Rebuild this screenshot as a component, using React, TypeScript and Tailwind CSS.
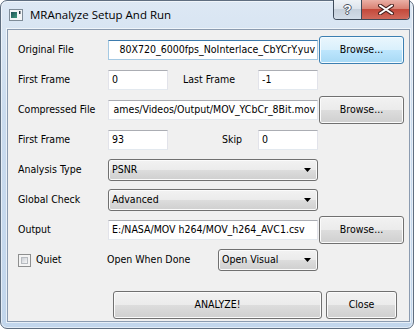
import type { ReactNode } from 'react';

const btnNormal =
  'rounded-[3px] border border-[#707070] bg-[linear-gradient(#f2f2f2_0%,#ebebeb_50%,#dddddd_50%,#cfcfcf_100%)] shadow-[inset_0_0_0_1px_#fbfbfb]';
const btnHot =
  'rounded-[3px] border border-[#3c7fb1] bg-[linear-gradient(#eaf6fd_0%,#d9f0fc_50%,#bee6fd_50%,#a7d9f5_100%)] shadow-[inset_0_0_0_1px_#f4fbff]';

function Button({ children, hot, className }: { children: ReactNode; hot?: boolean; className: string }) {
  return (
    <div className={`${hot ? btnHot : btnNormal} ${className} flex items-center justify-center shrink-0`}>
      {children}
    </div>
  );
}

function TextBox({
  text,
  className,
  end,
  focus,
}: {
  text: string;
  className: string;
  end?: boolean;
  focus?: boolean;
}) {
  const border = focus
    ? 'border border-[#a4c9e3] border-t-[#3d7bad]'
    : 'border border-[#e2e3ea] border-t-[#abadb3] border-b-[#e3e9ef]';
  return (
    <div
      className={`${className} ${border} h-[20px] bg-white flex items-center overflow-hidden whitespace-nowrap shrink-0 ${
        end ? 'justify-end pr-[2px]' : 'pl-[3px]'
      }`}
    >
      {text}
    </div>
  );
}

function Combo({ text, className }: { text: string; className: string }) {
  return (
    <div className={`${btnNormal} ${className} flex items-center justify-between pl-[3px] pr-[6px] shrink-0`}>
      <span>{text}</span>
      <svg width="7" height="4" viewBox="0 0 7 4">
        <polygon points="0,0 7,0 3.5,4" fill="#000" />
      </svg>
    </div>
  );
}

function Row({ label, children }: { label: ReactNode; children: ReactNode }) {
  return (
    <div className="flex items-center h-[30px] pl-[10px]">
      <div className="w-[90px] shrink-0">{label}</div>
      {children}
    </div>
  );
}

function TitleBar() {
  return (
    <div className="flex items-start h-[28px] shrink-0">
      <div className="flex items-center h-[28px] pl-[2px] gap-[7px]">
        <svg width="14" height="12" viewBox="0 0 14 12">
          <defs>
            <linearGradient id="ico" x1="0" y1="0" x2="1" y2="1">
              <stop offset="0" stopColor="#1d4f56" />
              <stop offset="1" stopColor="#3f9a7e" />
            </linearGradient>
          </defs>
          <rect x="0.5" y="0.5" width="13" height="11" fill="#f3f5f7" stroke="#7f8c98" />
          <rect x="2" y="3" width="6" height="6" fill="url(#ico)" />
          <rect x="10" y="2" width="1.5" height="3" fill="#2d3a46" />
        </svg>
        <span className="font-['Open_Sans',sans-serif] text-[11.5px] text-black">MRAnalyze Setup And Run</span>
      </div>
      <div className="ml-auto -mt-[1px] flex h-[20px] border border-t-0 border-[#3e4a59] rounded-b-[4px] overflow-hidden">
        <div className="w-[28px] border-r border-[#3e4a59] bg-[linear-gradient(#eef2f6_0%,#dde4ec_45%,#c6d0db_50%,#d3dde8_100%)] flex items-center justify-center">
          <span className="font-['Liberation_Sans',sans-serif] font-bold text-[13px] leading-none text-white [text-shadow:1px_0_0_#4a5563,-1px_0_0_#4a5563,0_1px_0_#4a5563,0_-1px_0_#4a5563]">
            ?
          </span>
        </div>
        <div className="w-[47px] bg-[linear-gradient(#eab0a6_0%,#d98274_45%,#c4493b_50%,#d06a5c_100%)] flex items-center justify-center">
          <svg width="16" height="11" viewBox="0 0 16 11">
            <path d="M2 1.5 L14 9.5 M14 1.5 L2 9.5" stroke="#4a2320" strokeWidth="4" strokeLinecap="round" />
            <path d="M2 1.5 L14 9.5 M14 1.5 L2 9.5" stroke="#fff" strokeWidth="2" strokeLinecap="round" />
          </svg>
        </div>
      </div>
    </div>
  );
}

export default function App() {
  return (
    <div className="w-[416px] h-[330px] bg-white">
      <div className="w-[414px] h-[329px] flex flex-col rounded-[7px] border border-[#5f6e80] bg-[linear-gradient(#dde8f4,#cadbee_35%,#c2d6ec)] pl-[6px] pr-[3px] pb-[6px] shadow-[inset_0_0_0_1px_rgba(255,255,255,0.55)]">
        <TitleBar />
        <div className="flex-1 flex flex-col border border-[#8b9bb0] bg-[#f0f0f0] pt-[5px] shadow-[0_0_0_1px_rgba(255,255,255,0.6)] font-['DejaVu_Sans_Condensed','DejaVu_Sans',sans-serif] text-[10.5px] text-black">
          <Row label="Original File">
            <TextBox focus end className="w-[210px]" text="80X720_6000fps_NoInterlace_CbYCrY.yuv" />
            <Button hot className="ml-[1px] w-[85px] h-[28px]">Browse...</Button>
          </Row>
          <Row label="First Frame">
            <TextBox className="w-[60px]" text="0" />
            <div className="w-[90px] pl-[15px]">Last Frame</div>
            <TextBox className="w-[60px]" text="-1" />
          </Row>
          <Row label="Compressed File">
            <TextBox end className="w-[210px]" text="ames/Videos/Output/MOV_YCbCr_8Bit.mov" />
            <Button className="ml-[1px] w-[85px] h-[28px]">Browse...</Button>
          </Row>
          <Row label="First Frame">
            <TextBox className="w-[60px]" text="93" />
            <div className="w-[90px] pl-[54px]">Skip</div>
            <TextBox className="w-[60px]" text="0" />
          </Row>
          <Row label="Analysis Type">
            <Combo className="w-[210px] h-[22px]" text="PSNR" />
          </Row>
          <Row label="Global Check">
            <Combo className="w-[210px] h-[22px]" text="Advanced" />
          </Row>
          <Row label="Output">
            <TextBox className="w-[210px]" text="E:/NASA/MOV h264/MOV_h264_AVC1.csv" />
            <Button className="ml-[1px] w-[85px] h-[28px]">Browse...</Button>
          </Row>
          <div className="flex items-center h-[30px] pl-[10px]">
            <div className="w-[89px] flex items-center gap-[5px]">
              <div className="w-[13px] h-[13px] border border-[#8e8f8f] bg-[#f4f4f4] p-[2px]">
                <div className="w-full h-full border border-[#b7bbc0] bg-[linear-gradient(135deg,#cbcfd5,#f7f7f7)]" />
              </div>
              <span>Quiet</span>
            </div>
            <div className="w-[111px]">Open When Done</div>
            <Combo className="w-[100px] h-[22px]" text="Open Visual" />
          </div>
          <div className="flex mt-[16px] pl-[105px] gap-[4px]">
            <Button className="w-[209px] h-[28px]">ANALYZE!</Button>
            <Button className="w-[71px] h-[28px]">Close</Button>
          </div>
        </div>
      </div>
    </div>
  );
}
